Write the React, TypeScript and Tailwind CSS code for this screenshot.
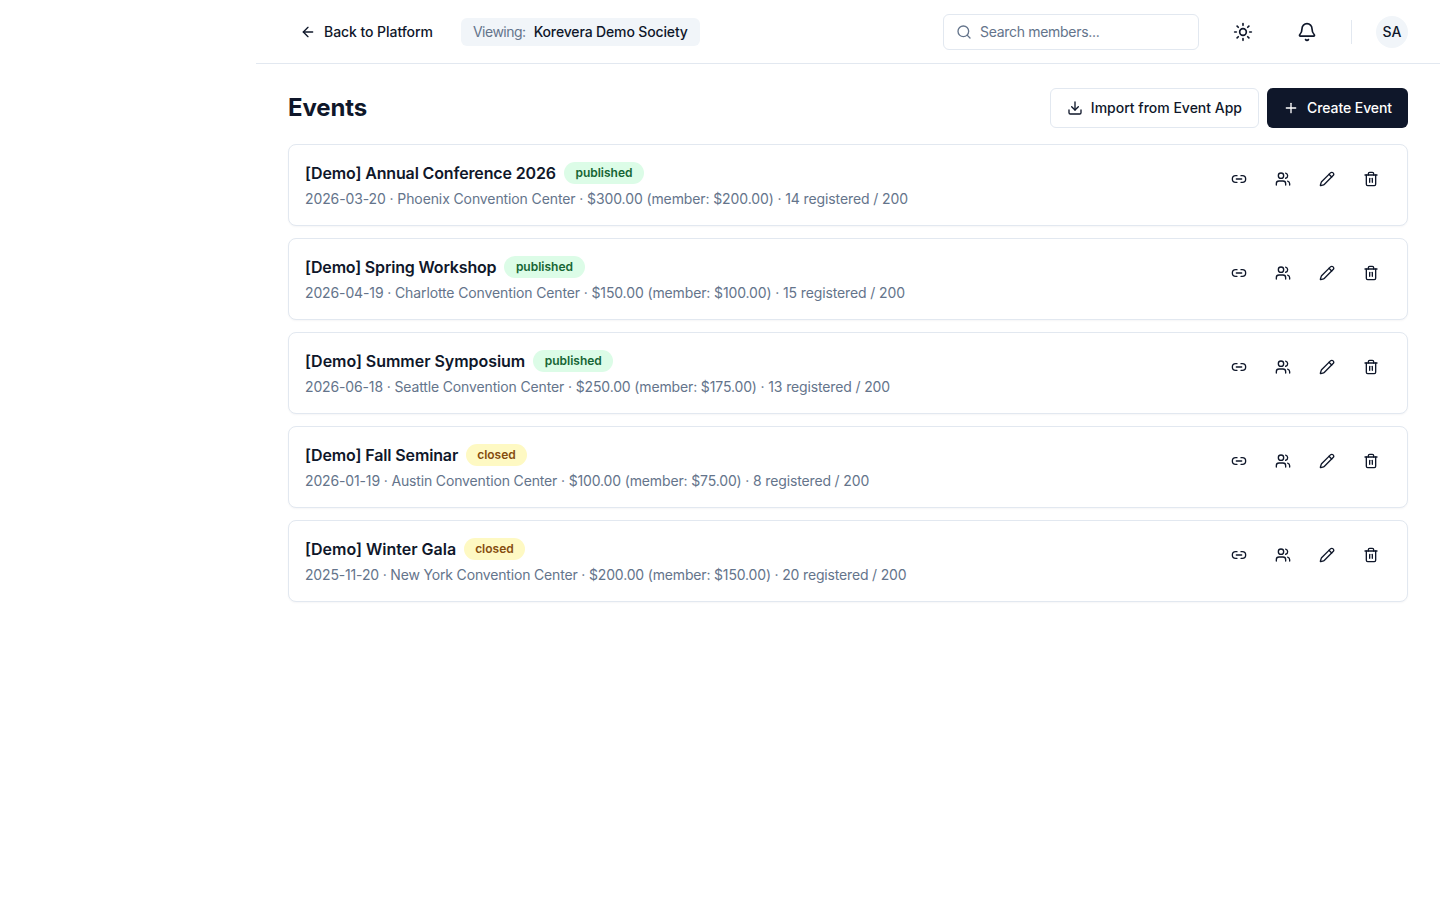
import React from "react";
import { ArrowLeft, Search, Sun, Bell, Download, Plus, Link2, Users, Pencil, Trash2 } from "lucide-react";

interface EventRow {
  title: string;
  status: "published" | "closed";
  meta: string;
  // the fallback font runs a bit wide, each line is pulled in by its own amount
  titleTracking: string;
  metaTracking: string;
}

const EVENTS: EventRow[] = [
  {
    title: "[Demo] Annual Conference 2026",
    status: "published",
    meta: "2026-03-20 · Phoenix Convention Center · $300.00 (member: $200.00) · 14 registered / 200",
    titleTracking: "tracking-[-0.14px]",
    metaTracking: "tracking-[-0.108px]",
  },
  {
    title: "[Demo] Spring Workshop",
    status: "published",
    meta: "2026-04-19 · Charlotte Convention Center · $150.00 (member: $100.00) · 15 registered / 200",
    titleTracking: "tracking-[-0.18px]",
    metaTracking: "tracking-[-0.124px]",
  },
  {
    title: "[Demo] Summer Symposium",
    status: "published",
    meta: "2026-06-18 · Seattle Convention Center · $250.00 (member: $175.00) · 13 registered / 200",
    titleTracking: "tracking-[-0.04px]",
    metaTracking: "tracking-[-0.14px]",
  },
  {
    title: "[Demo] Fall Seminar",
    status: "closed",
    meta: "2026-01-19 · Austin Convention Center · $100.00 (member: $75.00) · 8 registered / 200",
    titleTracking: "tracking-[-0.13px]",
    metaTracking: "tracking-[-0.146px]",
  },
  {
    title: "[Demo] Winter Gala",
    status: "closed",
    meta: "2025-11-20 · New York Convention Center · $200.00 (member: $150.00) · 20 registered / 200",
    titleTracking: "tracking-[0px]",
    metaTracking: "tracking-[-0.167px]",
  },
];

function EventCard({ event }: { event: EventRow }) {
  return (
    <div className="flex h-[82px] items-start justify-between rounded-lg border border-[#e2e8f0] bg-white px-4 pt-4 shadow-[0_1px_2px_rgba(15,23,42,0.04)]">
      <div>
        <div className="flex h-6 items-center gap-2">
          <h3 className={`text-base font-semibold text-[#0f172a] ${event.titleTracking}`}>{event.title}</h3>
          <span
            className={
              event.status === "published"
                ? "flex h-[22px] items-center rounded-full bg-[#dcfce7] px-[11.5px] text-xs font-semibold text-[#166534]"
                : "flex h-[22px] items-center rounded-full bg-[#fef9c3] px-[11px] text-xs font-semibold text-[#854d0e]"
            }
          >
            {event.status}
          </span>
        </div>
        <p className={`mt-1 text-sm leading-5 text-[#64748b] ${event.metaTracking}`}>{event.meta}</p>
      </div>
      <div className="flex items-center gap-3 pt-[2px] pr-[4px] text-[#0f172a]">
        <button className="flex h-8 w-8 items-center justify-center"><Link2 size={16} /></button>
        <button className="flex h-8 w-8 items-center justify-center"><Users size={16} /></button>
        <button className="flex h-8 w-8 items-center justify-center"><Pencil size={16} /></button>
        <button className="flex h-8 w-8 items-center justify-center"><Trash2 size={16} /></button>
      </div>
    </div>
  );
}

export default function App() {
  return (
    <div className="min-h-[900px] bg-white pl-64 font-['Inter',sans-serif] text-[#0f172a]">
      <header className="flex h-16 items-center justify-between border-b border-[#e2e8f0] px-8">
        <div className="flex items-center gap-4">
          <button className="flex h-9 items-center gap-2 px-3 text-sm font-medium tracking-[-0.06px]">
            <ArrowLeft size={16} />
            Back to Platform
          </button>
          <div className="flex h-7 items-center gap-2 rounded-md bg-[#f1f5f9] px-3 text-sm">
            <span className="tracking-[-0.5px] text-[#64748b]">Viewing:</span>
            <span className="font-medium tracking-[-0.14px]">Korevera Demo Society</span>
          </div>
        </div>
        <div className="flex items-center">
          <div className="flex h-9 w-64 items-center gap-2 rounded-md border border-[#e2e8f0] px-3 text-sm tracking-[-0.3px] text-[#64748b]">
            <Search size={16} />
            Search members...
          </div>
          <button className="ml-[26px] flex h-9 w-9 items-center justify-center"><Sun size={20} /></button>
          <button className="ml-7 flex h-9 w-9 items-center justify-center"><Bell size={20} /></button>
          <div className="mr-4 ml-[26px] h-6 w-px bg-[#e2e8f0]" />
          <div className="ml-2 flex h-8 w-8 items-center justify-center rounded-full bg-[#f1f5f9] text-sm font-medium">SA</div>
        </div>
      </header>
      <main className="px-8 pt-6">
        <div className="mb-4 flex items-center justify-between">
          <h1 className="text-2xl font-bold tracking-[-0.15px]">Events</h1>
          <div className="flex items-center gap-2">
            <button className="flex h-10 items-center gap-2 rounded-md border border-[#e2e8f0] bg-white px-4 text-sm font-medium">
              <Download size={16} />
              Import from Event App
            </button>
            <button className="flex h-10 items-center gap-2 rounded-md bg-[#0f172a] px-4 text-sm font-medium tracking-[-0.08px] text-white">
              <Plus size={16} />
              Create Event
            </button>
          </div>
        </div>
        <div className="flex flex-col gap-3">
          {EVENTS.map((event) => (
            <EventCard key={event.title} event={event} />
          ))}
        </div>
      </main>
    </div>
  );
}
